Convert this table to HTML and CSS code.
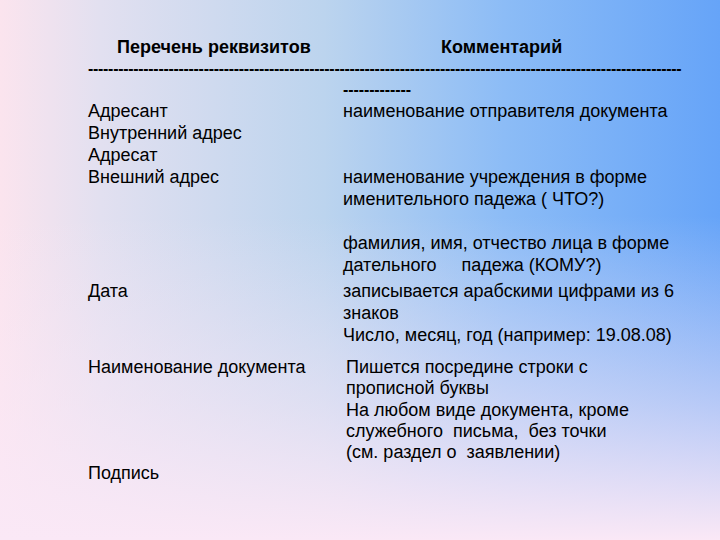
FILE: index.html
```html
<!DOCTYPE html>
<html lang="ru">
<head>
<meta charset="utf-8">
<title>Перечень реквизитов</title>
<link rel="stylesheet" href="styles.css">
</head>
<body>
<div class="slide">
  <div class="head">
    <div class="h1">Перечень реквизитов</div>
    <div class="h2">Комментарий</div>
  </div>
  <div class="dashes">----------------------------------------------------------------------------------------------------------------------</div>
  <div class="row r-dash">
    <div class="left"></div>
    <div class="right dashes2">-------------</div>
  </div>
  <div class="row">
    <div class="left">
      <div>Адресант</div>
      <div>Внутренний адрес</div>
      <div>Адресат</div>
      <div>Внешний адрес</div>
    </div>
    <div class="right">
      <div>наименование отправителя документа</div>
      <div class="blank"></div>
      <div class="blank"></div>
      <div>наименование учреждения в форме</div>
      <div>именительного падежа ( ЧТО?)</div>
      <div class="blank"></div>
      <div>фамилия, имя, отчество лица в форме</div>
      <div class="pre">дательного     падежа (КОМУ?)</div>
    </div>
  </div>
  <div class="row r-date">
    <div class="left"><div>Дата</div></div>
    <div class="right">
      <div>записывается арабскими цифрами из 6</div>
      <div>знаков</div>
      <div>Число, месяц, год (например: 19.08.08)</div>
    </div>
  </div>
  <div class="row r-name">
    <div class="left"><div>Наименование документа</div></div>
    <div class="right shifted">
      <div>Пишется посредине строки с</div>
      <div>прописной буквы</div>
      <div>На любом виде документа, кроме</div>
      <div class="pre">служебного  письма,  без точки</div>
      <div class="pre">(см. раздел о  заявлении)</div>
    </div>
  </div>
  <div class="row r-sign">
    <div class="left"><div>Подпись</div></div>
    <div class="right"></div>
  </div>
</div>
</body>
</html>
```
FILE: styles.css
```css
html, body {
  margin: 0;
  padding: 0;
}
body {
  width: 720px;
  height: 540px;
  overflow: hidden;
  font-family: "Liberation Sans", Arial, sans-serif;
  color: #000;
  background:
    linear-gradient(to bottom, rgba(250, 232, 246, 0) 40%, rgba(250, 232, 246, 0.55) 75%, rgba(250, 232, 246, 1) 100%),
    linear-gradient(to right, #fbe4ee 0%, #e2e0f0 14%, #bcd4ee 45%, #8cbcf6 70%, #66a4f8 100%);
}
.slide {
  padding: 36px 0 0 88px;
  font-size: 18px;
  line-height: 22px;
  white-space: nowrap;
}
.pre {
  white-space: pre;
}
.head {
  display: flex;
  font-weight: bold;
  font-size: 18px;
}
.h1 {
  padding-left: 29px;
  width: 324px;
}
.dashes {
  font-weight: bold;
  font-size: 16px;
  letter-spacing: -0.3px;
}
.dashes2 {
  font-weight: bold;
  font-size: 16px;
  letter-spacing: -0.1px;
}
.row {
  display: grid;
  grid-template-columns: 255px 1fr;
}
.r-dash {
  height: 20px;
  line-height: 20px;
}
.blank {
  height: 22px;
}
.r-date {
  margin-top: 4px;
}
.r-name {
  margin-top: 11px;
  line-height: 21.25px;
}
.r-sign {
  line-height: 21px;
}
.shifted {
  padding-left: 3px;
}
```
